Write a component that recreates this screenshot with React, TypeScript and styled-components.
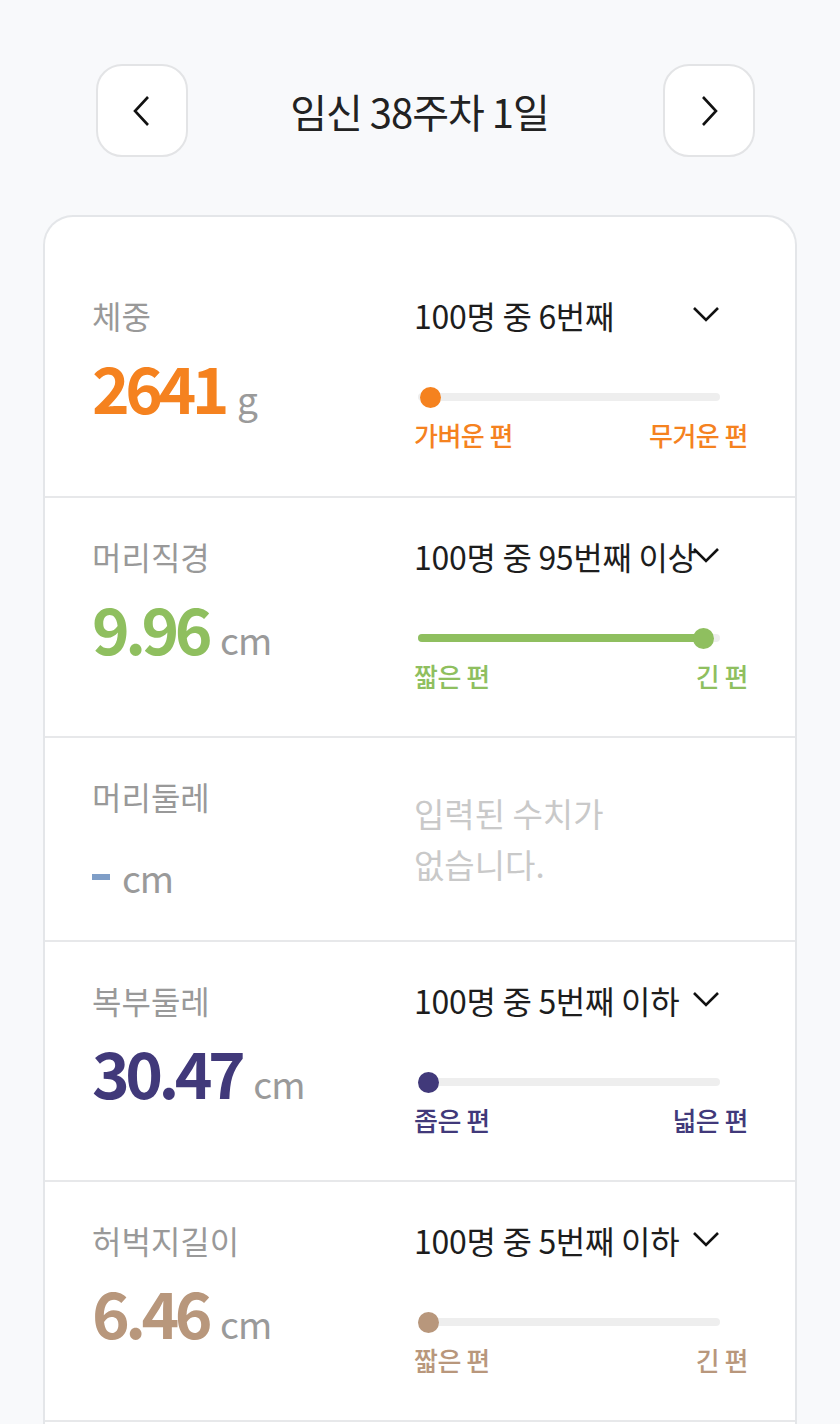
import React from 'react'
import styled, { createGlobalStyle } from 'styled-components'

const GlobalStyle = createGlobalStyle`
  html, body {
    margin: 0;
    padding: 0;
    background: #f8f9fb;
    font-family: "Noto Sans CJK KR", "Noto Sans", sans-serif;
  }
`

const Page = styled.div`
  width: 840px;
  min-height: 1424px;
  background: #f8f9fb;
  overflow: hidden;
`

const Header = styled.header`
  display: flex;
  align-items: center;
  justify-content: space-between;
  padding: 64px 85px 0 96px;
  height: 93px;
`

const NavButton = styled.button`
  width: 92px;
  height: 93px;
  border: 2px solid #e3e4e6;
  border-radius: 26px;
  background: #fff;
  display: flex;
  align-items: center;
  justify-content: center;
  padding: 0;
`

const Title = styled.h1`
  margin: 0 12px 0 0;
  font-size: 40px;
  font-weight: 400;
  letter-spacing: -1px;
  color: #222;
`

const Card = styled.section`
  margin: 58px 43px 0;
  background: #fff;
  border: 2px solid #e4e6e9;
  border-bottom: none;
  border-radius: 30px 30px 0 0;
  padding-top: 40px;
  min-height: 1300px;
`

const Row = styled.div<{ $h: number }>`
  display: grid;
  grid-template-columns: 322px 334px;
  padding-left: 47px;
  height: ${p => p.$h}px;
  border-bottom: 2px solid #e7e8ea;
  box-sizing: border-box;
`

const Left = styled.div`
  display: flex;
  flex-direction: column;
  padding-top: 37px;
`

const Label = styled.div`
  font-size: 32px;
  color: #999;
  line-height: 42px;
`

const ValueLine = styled.div<{ $top?: number }>`
  display: flex;
  align-items: baseline;
  gap: 12px;
  margin-top: ${p => p.$top ?? 12}px;
  line-height: 76px;
`

const Value = styled.span<{ $c: string }>`
  font-size: 64px;
  font-weight: 700;
  letter-spacing: -4.5px;
  color: ${p => p.$c};
`

const Unit = styled.span`
  font-size: 37px;
  color: #9a9a9a;
  letter-spacing: -1px;
`

const Right = styled.div`
  display: flex;
  flex-direction: column;
  padding-top: 37px;
`

const RankLine = styled.div`
  position: relative;
  width: 306px;
  height: 42px;
`

const Rank = styled.span`
  font-size: 32px;
  color: #1d1d1d;
  letter-spacing: -0.3px;
  line-height: 42px;
  white-space: nowrap;
`

const Chevron = styled.svg`
  position: absolute;
  right: 0;
  top: 11px;
`

const Track = styled.div`
  position: relative;
  width: 302px;
  height: 8px;
  margin: 57px 0 0 4px;
  border-radius: 4px;
  background: #eeeeee;
`

const Fill = styled.div<{ $c: string }>`
  height: 100%;
  border-radius: 4px;
  background: ${p => p.$c};
`

const Dot = styled.div<{ $c: string }>`
  position: absolute;
  top: 50%;
  width: 21px;
  height: 21px;
  margin: -10.5px 0 0 -10.5px;
  border-radius: 50%;
  background: ${p => p.$c};
`

const Ends = styled.div<{ $c: string }>`
  display: flex;
  justify-content: space-between;
  margin-top: 16px;
  font-size: 26px;
  font-weight: 500;
  letter-spacing: -0.5px;
  line-height: 36px;
  color: ${p => p.$c};
`

const Empty = styled.div`
  padding-top: 50px;
  font-size: 33px;
  color: #c9c9c9;
  line-height: 51px;
`

const Dash = styled.span`
  display: inline-block;
  width: 18px;
  height: 6px;
  background: #7f9ec7;
  align-self: center;
`

const Arrow = ({ dir }: { dir: 'left' | 'right' }) => (
  <svg width="20" height="34" viewBox="0 0 20 34">
    <path
      d={dir === 'left' ? 'M16 3 L3 17 L16 31' : 'M4 3 L17 17 L4 31'}
      fill="none"
      stroke="#111"
      strokeWidth="2.6"
    />
  </svg>
)

type Metric = {
  label: string
  value: string
  unit: string
  color: string
  rank: string
  pos: number
  fill?: boolean
  lo: string
  hi: string
}

const metrics: Metric[] = [
  { label: '체중', value: '2641', unit: 'g', color: '#f5821f', rank: '100명 중 6번째', pos: 4, lo: '가벼운 편', hi: '무거운 편' },
  { label: '머리직경', value: '9.96', unit: 'cm', color: '#8fbf5f', rank: '100명 중 95번째 이상', pos: 94.5, fill: true, lo: '짧은 편', hi: '긴 편' },
  { label: '복부둘레', value: '30.47', unit: 'cm', color: '#41397a', rank: '100명 중 5번째 이하', pos: 3.5, lo: '좁은 편', hi: '넓은 편' },
  { label: '허벅지길이', value: '6.46', unit: 'cm', color: '#b8977c', rank: '100명 중 5번째 이하', pos: 3.5, lo: '짧은 편', hi: '긴 편' },
]

const MetricRow = ({ m, h }: { m: Metric; h: number }) => (
  <Row $h={h}>
    <Left>
      <Label>{m.label}</Label>
      <ValueLine>
        <Value $c={m.color}>{m.value}</Value>
        <Unit>{m.unit}</Unit>
      </ValueLine>
    </Left>
    <Right>
      <RankLine>
        <Rank>{m.rank}</Rank>
        <Chevron width="28" height="18" viewBox="0 0 28 18">
          <path d="M2 3 L14 15 L26 3" fill="none" stroke="#111" strokeWidth="2.6" />
        </Chevron>
      </RankLine>
      <Track>
        {m.fill && <Fill $c={m.color} style={{ width: `${m.pos}%` }} />}
        <Dot $c={m.color} style={{ left: `${m.pos}%` }} />
      </Track>
      <Ends $c={m.color}>
        <span>{m.lo}</span>
        <span>{m.hi}</span>
      </Ends>
    </Right>
  </Row>
)

export default function App() {
  return (
    <Page>
      <GlobalStyle />
      <Header>
        <NavButton aria-label="이전">
          <Arrow dir="left" />
        </NavButton>
        <Title>임신 38주차 1일</Title>
        <NavButton aria-label="다음">
          <Arrow dir="right" />
        </NavButton>
      </Header>
      <Card>
        <MetricRow m={metrics[0]} h={241} />
        <MetricRow m={metrics[1]} h={240} />
        <Row $h={204}>
          <Left>
            <Label>머리둘레</Label>
            <ValueLine $top={22}>
              <Dash />
              <Unit>cm</Unit>
            </ValueLine>
          </Left>
          <Empty>
            입력된 수치가
            <br />
            없습니다.
          </Empty>
        </Row>
        <MetricRow m={metrics[2]} h={240} />
        <MetricRow m={metrics[3]} h={240} />
      </Card>
    </Page>
  )
}
